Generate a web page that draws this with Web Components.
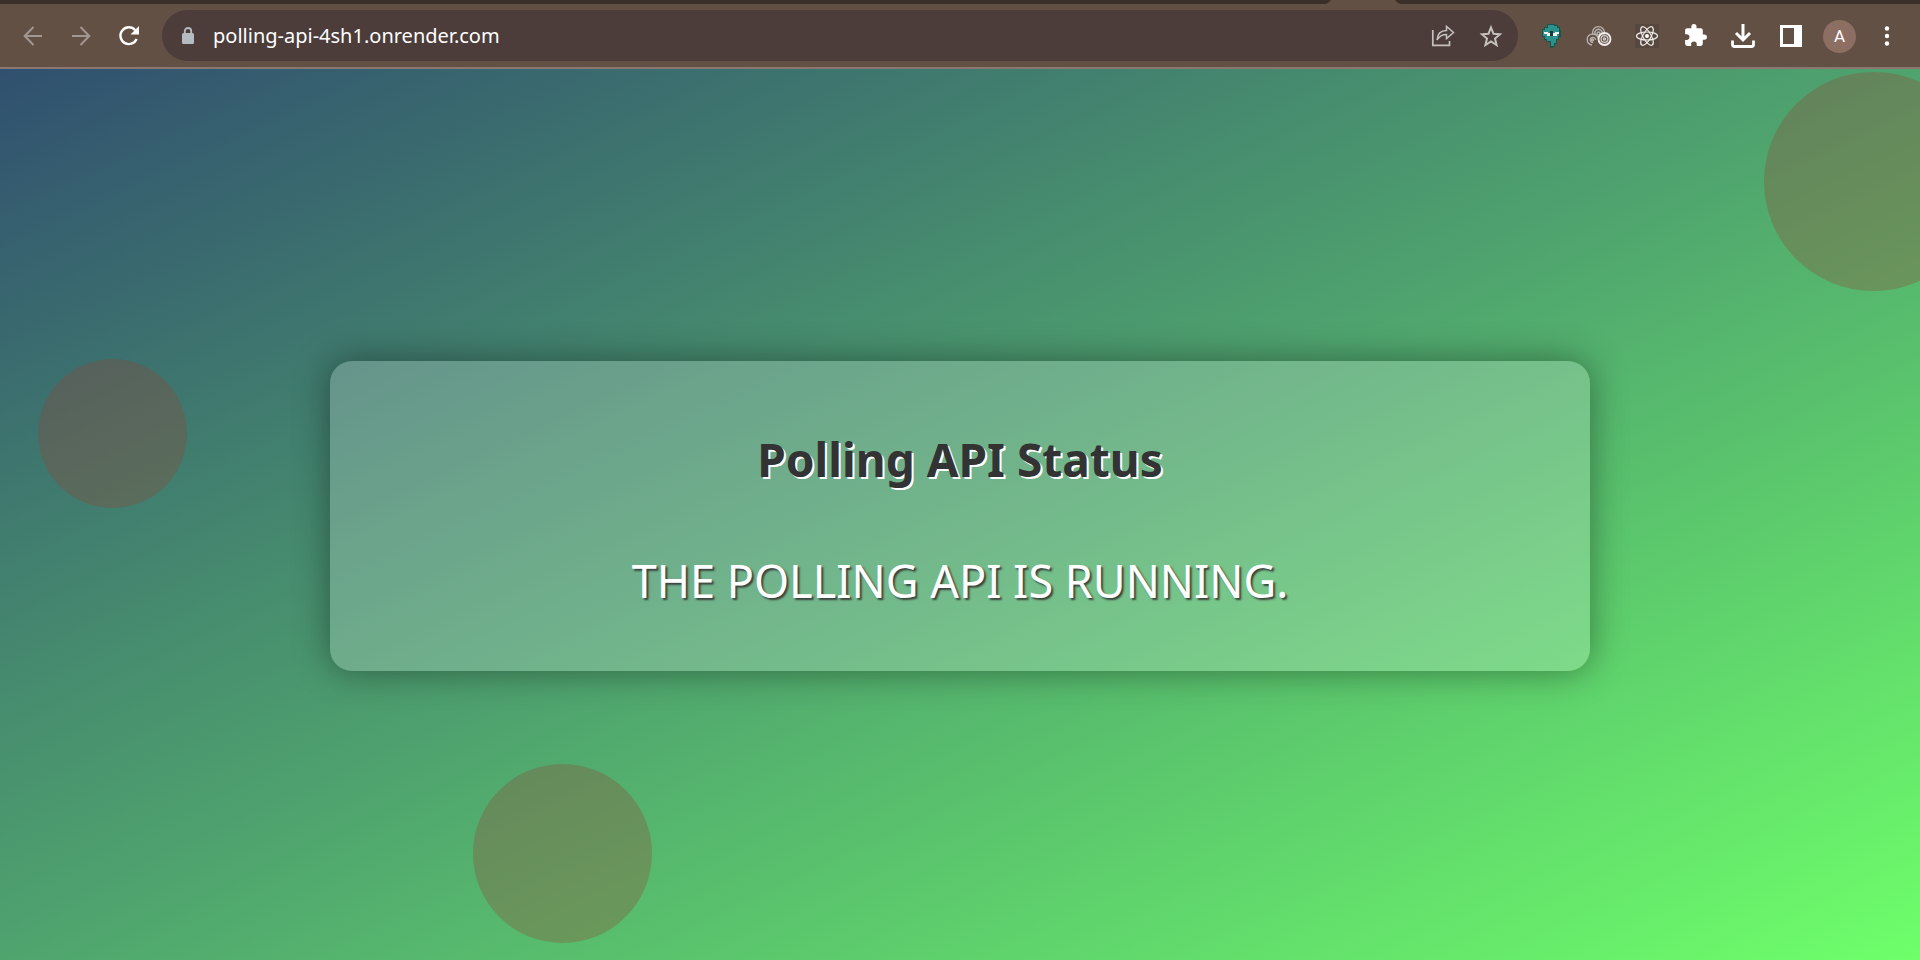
<!DOCTYPE html>
<html lang="en">
<head>
<meta charset="utf-8">
<title>Polling API Status</title>
<style>
html, body { margin: 0; height: 100%; }
body { font-family: "Noto Sans", sans-serif; overflow: hidden; }
</style>
</head>
<body>
<app-window></app-window>
<script>
const define = (name, html, setup) => customElements.define(name, class extends HTMLElement {
  constructor() {
    super();
    this.attachShadow({ mode: "open" }).innerHTML = html;
    if (setup) setup(this);
  }
});

define("tab-strip", `
<style>
:host { display: block; height: 4px; background: #3b2f29; }
svg { display: block; width: 100%; height: 4px; }
.tab { margin-left: 69%; width: 76px; }
</style>
<div class="tab"><svg viewBox="0 0 76 4" preserveAspectRatio="none" aria-hidden="true"><path d="M0 4Q4 3 6 0H70Q72 3 76 4Z" fill="#635045"/></svg></div>`);

define("icon-button", `
<style>
:host { display: block; flex: none; }
button { display: grid; place-items: center; width: 32px; height: 32px; padding: 0; border: 0; background: none; color: inherit; }
</style>
<button type="button"><slot></slot></button>`, el => {
  el.shadowRoot.querySelector("button").setAttribute("aria-label", el.getAttribute("label"));
});

define("address-bar", `
<style>
:host { display: flex; flex: 1; min-width: 0; align-items: center; height: 51px; border-radius: 26px; background: #4c3d3a; color: #c6c0bd; box-sizing: border-box; padding: 0 11px 0 19px; }
svg { display: block; flex: none; }
input { flex: 1; min-width: 0; margin: 0 0 0 18px; padding: 0; border: 0; outline: 0; background: none; color: #fff; font: 20px/28px "Noto Sans", sans-serif; }
.actions { display: flex; gap: 16px; }
</style>
<svg width="14" height="18" viewBox="0 0 14 18" aria-hidden="true"><rect x="1" y="6" width="12" height="11" rx="1.5" fill="#b5bbc0"/><path d="M3.8 7V4.2a3.2 3.2 0 0 1 6.4 0V7" fill="none" stroke="#b5bbc0" stroke-width="1.8"/></svg>
<input type="text" aria-label="Address" value="polling-api-4sh1.onrender.com">
<div class="actions">
<icon-button label="Share"><svg width="24" height="24" viewBox="0 0 24 24" fill="none" stroke="currentColor" stroke-width="1.7"><path d="M1.8 6V21.3H18.5V17"/><path d="M6 16C6.5 9 10.500 6.500 15.500 6.500V2.500L22.500 8.500 15.500 14.500V10.500C11 10.500 8 12.500 6 16Z" stroke-width="1.5"/></svg></icon-button>
<icon-button label="Bookmark"><svg width="24" height="24" viewBox="0 0 24 24" fill="none" stroke="currentColor" stroke-width="2"><path d="M12 3.500L14.500 9.700 21 10.200 16 14.500 17.600 21 12 17.400 6.400 21 8 14.500 3 10.200 9.500 9.700Z"/></svg></icon-button>
</div>`);

define("browser-toolbar", `
<style>
:host { display: flex; align-items: center; height: 65px; box-sizing: border-box; padding: 0 17px; border-bottom: 2px solid #8b7670; background: #635045; color: #fff; }
svg { display: block; }
.nav { display: flex; gap: 16px; margin-right: 17px; }
.dim { color: #a39791; }
.tools { display: flex; gap: 16px; margin-left: 17px; }
.avatar { display: grid; place-items: center; width: 33px; height: 33px; border-radius: 50%; background: #8d6e63; font: 17px/24px Roboto, sans-serif; color: #fff; }
</style>
<div class="nav">
<icon-button class="dim" label="Back"><svg width="24" height="24" viewBox="0 0 24 24" fill="none" stroke="currentColor" stroke-width="2"><path d="M21 12H4M12.500 3L3.700 12 12.500 21"/></svg></icon-button>
<icon-button class="dim" label="Forward"><svg width="24" height="24" viewBox="0 0 24 24" fill="none" stroke="currentColor" stroke-width="2"><path d="M3 12H20M11.500 3L20.300 12 11.500 21"/></svg></icon-button>
<icon-button label="Reload"><svg width="24" height="24" viewBox="0 0 24 24"><path d="M19.600 15A8.400 8.400 0 1 1 18.200 6.200" fill="none" stroke="currentColor" stroke-width="2.400"/><path d="M22 2V10.500H13.500Z" fill="currentColor"/></svg></icon-button>
</div>
<address-bar></address-bar>
<div class="tools">
<icon-button label="Bubble extension"><svg width="24" height="24" viewBox="0 0 24 24"><path d="M8 0H16V1H19V3H21V6H22V13H20V16H18V20H16V23H14V24H11V18H7V16H5V13H3V5H5V3H8Z" fill="#17554f"/><path d="M9 1H15V2H18V4H20V12H19V15H17V19H15V22H12V17H8V15H6V12H4V6H6V4H9Z" fill="#2c918a"/><path d="M5 8H9V9H11V8H14V9H16V8H20V10H18V12H8V10H5Z" fill="#f4f1ec"/><path d="M11 7H14V12H11Z" fill="#12383c"/></svg></icon-button>
<icon-button label="Spiral extension"><svg width="26" height="24" viewBox="0 0 26 24" fill="none" stroke="#d2cecb" stroke-width="1.300"><g stroke="#b9b3af"><path d="M6 21A5.500 5.500 0 1 1 12 14"/><path d="M7 18.500A2.600 2.600 0 1 1 9.500 16"/><circle cx="6.500" cy="16" r="1"/><path d="M7 11A6 6 0 1 1 18 11"/><path d="M9.500 11A3.600 3.600 0 1 1 15.500 11"/><circle cx="12.500" cy="9.500" r="1.500"/></g><circle cx="18.500" cy="15" r="6" stroke="#f1efee" stroke-width="1.800"/><circle cx="18.500" cy="15" r="3.400"/><circle cx="18.500" cy="15" r="1.100"/></svg></icon-button>
<icon-button label="React Developer Tools"><svg width="24" height="24" viewBox="0 0 24 24" fill="none" stroke="#f0eeec" stroke-width="1.200"><rect width="24" height="24" rx="1" fill="#57483f" stroke="none"/><ellipse cx="12" cy="12" rx="10.500" ry="4"/><ellipse cx="12" cy="12" rx="10.500" ry="4" transform="rotate(60 12 12)"/><ellipse cx="12" cy="12" rx="10.500" ry="4" transform="rotate(120 12 12)"/><circle cx="12" cy="12" r="2" fill="#fff" stroke="none"/></svg></icon-button>
<icon-button label="Extensions"><svg width="25" height="25" viewBox="0 0 24 24" fill="currentColor"><path d="M20.500 11H19V7a2 2 0 0 0-2-2h-4V3.500a2.500 2.500 0 0 0-5 0V5H4a2 2 0 0 0-2 2v3.800h1.500a2.700 2.700 0 0 1 0 5.400H2V20a2 2 0 0 0 2 2h3.800v-1.500a2.700 2.700 0 0 1 5.400 0V22H17a2 2 0 0 0 2-2v-4h1.500a2.500 2.500 0 0 0 0-5z"/></svg></icon-button>
<icon-button label="Downloads"><svg width="24" height="24" viewBox="0 0 24 24" fill="none" stroke="currentColor" stroke-width="3"><path d="M12 0V15M5 9L12 16 19 9"/><path d="M1.500 16.500V20.500Q1.500 22.500 3.500 22.500H20.500Q22.500 22.500 22.500 20.500V16.500" stroke-width="2.800"/></svg></icon-button>
<icon-button label="Side panel"><svg width="22" height="22" viewBox="0 0 22 22"><path d="M0 0H22V22H0ZM3 3V19H14V3Z" fill="currentColor" fill-rule="evenodd"/></svg></icon-button>
<icon-button label="Profile"><span class="avatar">A</span></icon-button>
<icon-button label="Menu"><svg width="6" height="20" viewBox="0 0 6 20" fill="currentColor"><circle cx="3" cy="2.500" r="2.200"/><circle cx="3" cy="10" r="2.200"/><circle cx="3" cy="17.500" r="2.200"/></svg></icon-button>
</div>`);

define("status-card", `
<style>
:host { display: block; box-sizing: border-box; width: 1260px; max-width: 90%; padding: 66px 32px 58px; border-radius: 22px; background: rgba(255, 255, 255, .2); box-shadow: 0 0 36px rgba(0, 0, 0, .4); text-align: center; position: relative; }
::slotted(h1) { margin: 0 0 58px; font-size: 46px; line-height: 64px; font-weight: 700; color: #333; text-shadow: 2px 2px 0 #fff; }
::slotted(p) { margin: 0; font-size: 45px; line-height: 64px; color: #fff; text-transform: uppercase; text-shadow: 2px 2px 2px rgba(51, 51, 51, .9); }
</style>
<slot></slot>`);

define("floating-circle", `
<style>
:host { display: block; position: absolute; border-radius: 50%; background: rgba(150, 66, 50, .3); aspect-ratio: 1; }
</style>`);

define("status-page", `
<style>
:host { position: relative; display: grid; place-items: center; overflow: hidden; padding-top: 3px; background: linear-gradient(to bottom right, #30506f, #4fa46e 50%, #6eff6a); }
.left { left: 2%; top: 290px; width: 149px; }
.bottom { left: 473px; bottom: 17px; width: 179px; }
.right { right: -63px; top: 3px; width: 219px; }
</style>
<floating-circle class="left"></floating-circle>
<floating-circle class="bottom"></floating-circle>
<floating-circle class="right"></floating-circle>
<status-card><h1>Polling API Status</h1><p>The Polling API is running.</p></status-card>`);

define("app-window", `
<style>
:host { display: flex; flex-direction: column; min-height: 100%; }
status-page { flex: 1; }
</style>
<tab-strip></tab-strip>
<browser-toolbar></browser-toolbar>
<status-page></status-page>`);
</script>
</body>
</html>
